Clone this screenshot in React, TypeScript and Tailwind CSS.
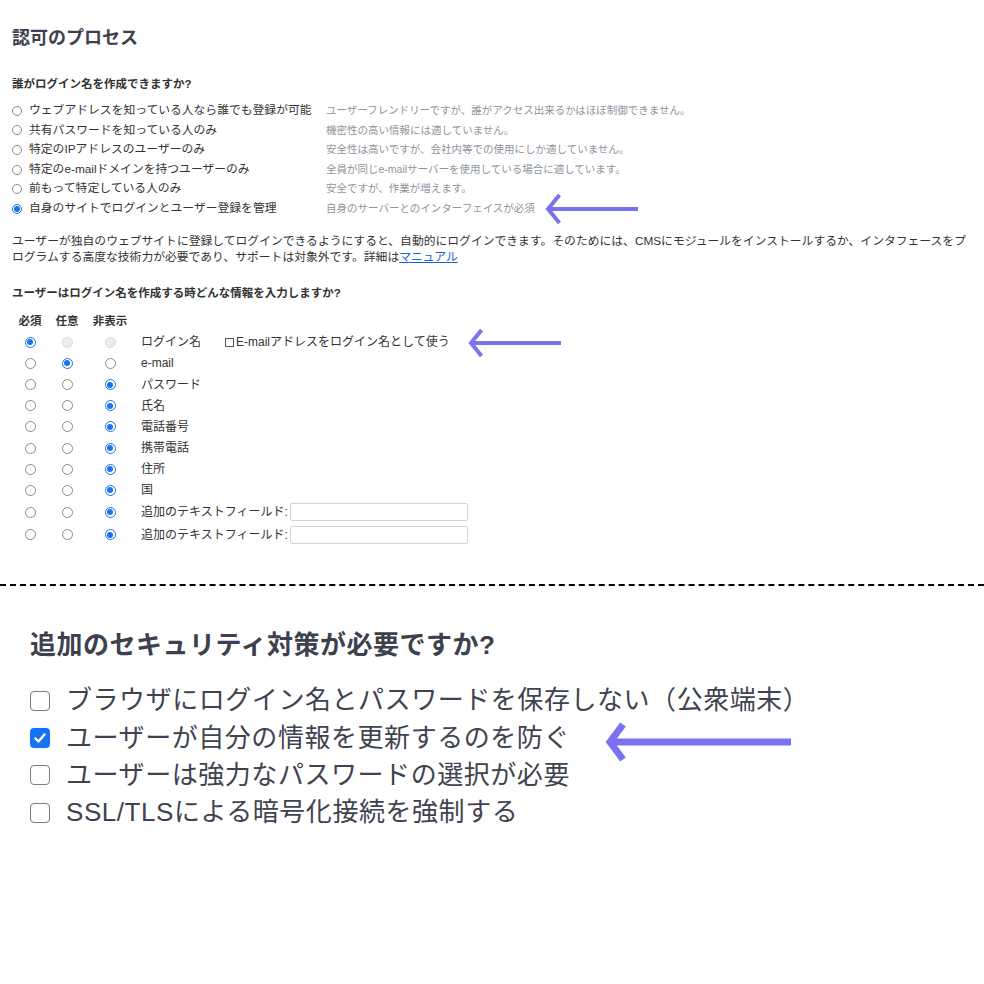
import React from "react"

const font = { fontFamily: '"Liberation Sans", "Noto Sans CJK JP", sans-serif' }

type RadioProps = { checked?: boolean; disabled?: boolean; size?: "sm" | "md" }

const Radio = ({ checked, disabled, size = "md" }: RadioProps) => {
	const box = size === "sm" ? "w-[10px] h-[10px]" : "w-[11px] h-[11px]"
	if (disabled) {
		return <span className={`${box} inline-block rounded-full border border-[#d9d9d9] bg-[#ececec]`} />
	}
	if (checked) {
		return (
			<span className={`${box} inline-flex items-center justify-center rounded-full border border-[#1a73e8] bg-white`}>
				<span className="w-[6px] h-[6px] rounded-full bg-[#1a73e8]" />
			</span>
		)
	}
	return <span className={`${box} inline-block rounded-full border border-[#8a8a8a] bg-white`} />
}

const Arrow = ({ className, w, h, stroke }: { className: string; w: number; h: number; stroke: number }) => (
	<svg className={`absolute ${className}`} width={w} height={h} viewBox={`0 0 ${w} ${h}`} fill="none">
		<path
			d={`M ${w - 2} ${h / 2} L ${stroke} ${h / 2} M ${h / 2.2} ${stroke / 2 + 1} L ${stroke} ${h / 2} L ${h / 2.2} ${h - stroke / 2 - 1}`}
			stroke="#7b72ef"
			strokeWidth={stroke}
			strokeLinecap="butt"
			strokeLinejoin="miter"
		/>
	</svg>
)

const whoOptions = [
	{ label: "ウェブアドレスを知っている人なら誰でも登録が可能", note: "ユーザーフレンドリーですが、誰がアクセス出来るかはほぼ制御できません。" },
	{ label: "共有パスワードを知っている人のみ", note: "機密性の高い情報には適していません。" },
	{ label: "特定のIPアドレスのユーザーのみ", note: "安全性は高いですが、会社内等での使用にしか適していません。" },
	{ label: "特定のe-mailドメインを持つユーザーのみ", note: "全員が同じe-mailサーバーを使用している場合に適しています。" },
	{ label: "前もって特定している人のみ", note: "安全ですが、作業が増えます。" },
	{ label: "自身のサイトでログインとユーザー登録を管理", note: "自身のサーバーとのインターフェイスが必須", checked: true }
]

type Field = { label: string; sel: 0 | 1 | 2; input?: boolean; login?: boolean }

const fields: Field[] = [
	{ label: "ログイン名", sel: 0, login: true },
	{ label: "e-mail", sel: 1 },
	{ label: "パスワード", sel: 2 },
	{ label: "氏名", sel: 2 },
	{ label: "電話番号", sel: 2 },
	{ label: "携帯電話", sel: 2 },
	{ label: "住所", sel: 2 },
	{ label: "国", sel: 2 },
	{ label: "追加のテキストフィールド:", sel: 2, input: true },
	{ label: "追加のテキストフィールド:", sel: 2, input: true }
]

const security = [
	{ label: "ブラウザにログイン名とパスワードを保存しない（公衆端末）" },
	{ label: "ユーザーが自分の情報を更新するのを防ぐ", checked: true },
	{ label: "ユーザーは強力なパスワードの選択が必要" },
	{ label: "SSL/TLSによる暗号化接続を強制する" }
]

const App = () => {
	return (
		<div className="relative w-[984px] h-[984px] bg-white overflow-hidden" style={font}>
			<div className="px-3 pt-[25px] text-[#333]">
				<h1 className="text-[18px] leading-[26px] font-bold text-[#3c414d]">認可のプロセス</h1>

				<h2 className="mt-[25px] text-[11.5px] leading-[16px] font-bold text-[#333]">誰がログイン名を作成できますか?</h2>

				<div className="mt-[9px]">
					{whoOptions.map((o, i) => (
						<div key={i} className="grid grid-cols-[17px_297px_1fr] items-center h-[19.6px]">
							<span className="flex items-center">
								<Radio size="sm" checked={o.checked} />
							</span>
							<span className="text-[11.8px] whitespace-nowrap">{o.label}</span>
							<span className="text-[10.5px] text-[#8f949c] whitespace-nowrap">{o.note}</span>
						</div>
					))}
				</div>

				<p className="mt-[14px] text-[11.8px] leading-[16px] whitespace-nowrap text-[#333]">
					ユーザーが独自のウェブサイトに登録してログインできるようにすると、自動的にログインできます。そのためには、CMSにモジュールをインストールするか、インタフェースをプ
					<br />
					ログラムする高度な技術力が必要であり、サポートは対象外です。詳細は
					<a className="text-[#1c5fd8] underline">マニュアル</a>
				</p>

				<h2 className="mt-[20px] text-[11.5px] leading-[16px] font-bold text-[#333]">
					ユーザーはログイン名を作成する時どんな情報を入力しますか?
				</h2>

				<div className="mt-[11px]">
					<div className="grid grid-cols-[36px_38px_48px_1fr] items-center h-[20px] text-[11.5px] font-bold text-[#333]">
						<span className="text-center">必須</span>
						<span className="text-center">任意</span>
						<span className="text-center">非表示</span>
						<span />
					</div>
					{fields.map((f, i) => (
						<div
							key={i}
							className={`grid grid-cols-[36px_38px_48px_1fr] items-center ${f.input ? "h-[22.5px]" : "h-[21.2px]"}`}
						>
							<span className="flex justify-center">
								<Radio checked={f.sel === 0} />
							</span>
							<span className="flex justify-center">
								<Radio checked={f.sel === 1} disabled={f.login} />
							</span>
							<span className="flex justify-center">
								<Radio checked={f.sel === 2} disabled={f.login} />
							</span>
							<span className="flex items-center pl-[7px] text-[12px] text-[#333] whitespace-nowrap">
								{f.label}
								{f.login && (
									<span className="flex items-center ml-[24px]">
										<span className="w-[9px] h-[9px] border border-[#555] bg-white" />
										<span className="ml-[2px]">E-mailアドレスをログイン名として使う</span>
									</span>
								)}
								{f.input && (
									<input
										type="text"
										className="ml-[2px] w-[178px] h-[18px] border border-[#d4d4d4] rounded-[2px] bg-white outline-none"
									/>
								)}
							</span>
						</div>
					))}
				</div>
			</div>

			<div className="mt-[38px] border-t-2 border-dashed border-black" />

			<div className="pl-[30px] pt-[41px] text-[#3f4350]">
				<h2 className="text-[26px] leading-[36px] font-bold tracking-[0.5px] text-[#3c414d]">追加のセキュリティ対策が必要ですか?</h2>
				<div className="mt-[19px]">
					{security.map((s, i) => (
						<div key={i} className="flex items-center h-[37.3px]">
							{s.checked ? (
								<span className="w-[20px] h-[20px] rounded-[4px] bg-[#1574f5] flex items-center justify-center">
									<svg width="14" height="14" viewBox="0 0 14 14" fill="none">
										<path d="M2.5 7.5 L5.5 10.5 L11.5 3.5" stroke="white" strokeWidth="2.4" strokeLinecap="round" strokeLinejoin="round" />
									</svg>
								</span>
							) : (
								<span className="w-[20px] h-[20px] rounded-[4px] border-[1.5px] border-[#7a7a7a] bg-white" />
							)}
							<span className="ml-[16px] text-[26px] tracking-[0.55px] whitespace-nowrap">{s.label}</span>
						</div>
					))}
				</div>
			</div>

			<Arrow className="left-[544px] top-[192px]" w={96} h={34} stroke={4} />
			<Arrow className="left-[467px] top-[327px]" w={96} h={32} stroke={4} />
			<Arrow className="left-[603px] top-[720px]" w={190} h={44} stroke={7} />
		</div>
	)
}

export default App
